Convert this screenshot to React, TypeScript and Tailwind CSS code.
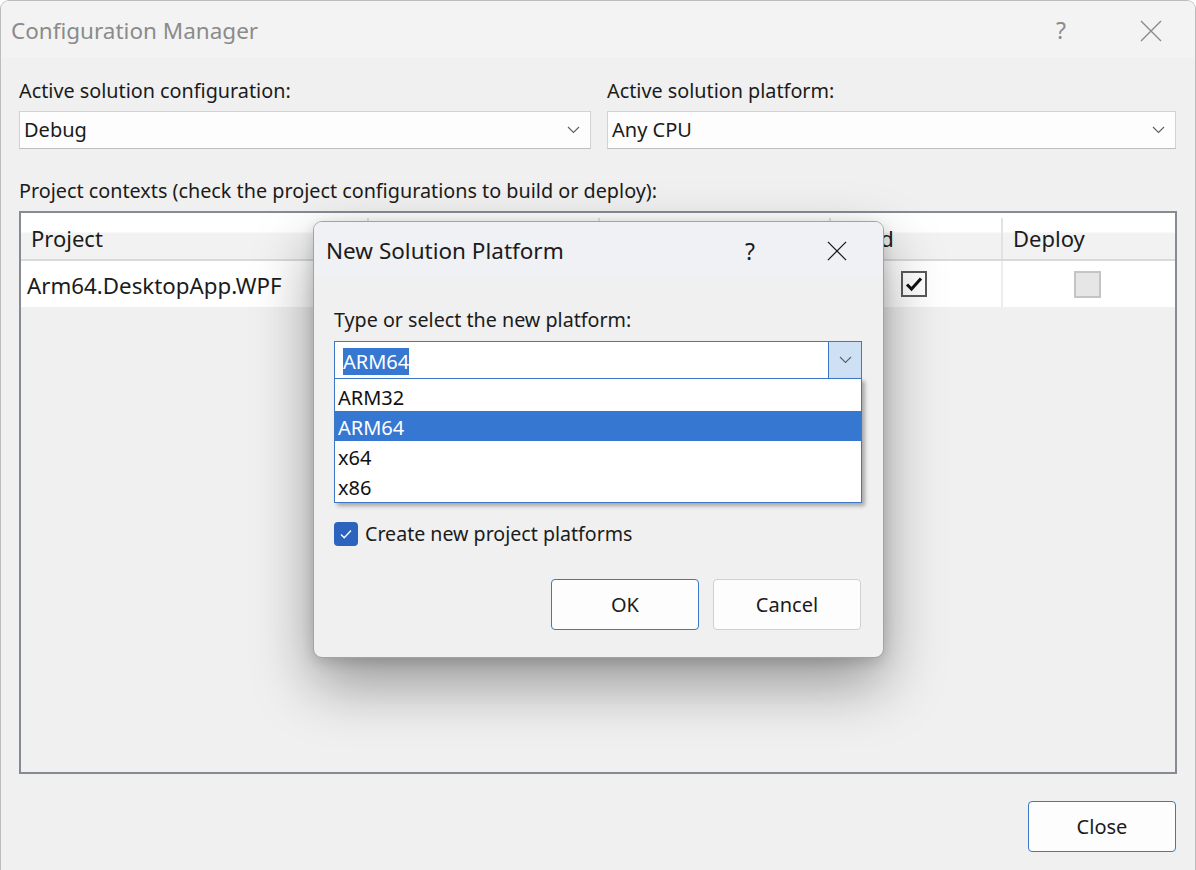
import React from "react";

// Configuration Manager with the "New Solution Platform" dialog on top

const font = { fontFamily: '"Noto Sans", "Open Sans", sans-serif' };

function Chevron({ className = "" }: { className?: string }) {
  return (
    <svg width="13" height="8" viewBox="0 0 13 8" className={className}>
      <path d="M1 1l5.5 5.5L12 1" fill="none" stroke="#5f5f5f" strokeWidth="1.1" />
    </svg>
  );
}

function CloseGlyph({ size = 22, color = "#8a8a8a" }: { size?: number; color?: string }) {
  return (
    <svg width={size} height={size} viewBox="0 0 22 22">
      <path d="M1 1l20 20M21 1L1 21" stroke={color} strokeWidth="1.4" fill="none" />
    </svg>
  );
}

function Combo({ value }: { value: string }) {
  return (
    <div className="flex h-[38px] items-center justify-between border border-[#d2d2d2] border-b-[#bdbdbd] bg-[#fdfdfd] pl-[4px] pr-[10px] text-[20px] text-[#1b1b1b]">
      <span>{value}</span>
      <Chevron />
    </div>
  );
}

function NewPlatformDialog() {
  const items = ["ARM32", "ARM64", "x64", "x86"];
  return (
    <div className="absolute left-[313px] top-[221px] flex h-[437px] w-[571px] flex-col overflow-hidden rounded-[9px] border border-[#a3a3a3] bg-[#f0f0f0] shadow-[0_26px_60px_rgba(0,0,0,0.38),0_4px_14px_rgba(0,0,0,0.14)]">
      <div className="flex h-[55px] items-center bg-[#eff1f5] pl-[12px] pt-[3px]">
        <span className="text-[22.5px] text-[#1b1b1b]">New Solution Platform</span>
        <span className="ml-auto mr-[72px] text-[23px] text-[#1b1b1b]">?</span>
        <span className="mr-[36px]">
          <CloseGlyph size={20} color="#1b1b1b" />
        </span>
      </div>
      <div className="flex flex-1 flex-col px-[20px] pt-[30px]">
        <div className="text-[19.7px] leading-[26px] text-[#1b1b1b]">Type or select the new platform:</div>
        <div className="relative mt-[8px] w-[528px]">
          <div className="flex h-[38px] items-center border border-[#3c78c6] bg-white">
            <div className="flex-1 pl-[8px] pt-[2px]">
              <span className="bg-[#3677d1] text-[20px] leading-[27px] text-white">ARM64</span>
            </div>
            <div className="flex h-full w-[33px] items-center justify-center border-l border-[#3c78c6] bg-[#cde0f4]">
              <Chevron />
            </div>
          </div>
          <div className="absolute left-0 right-0 top-[37px] z-10 border border-[#3c78c6] bg-white pt-[2px] pb-[1px] shadow-[3px_3px_4px_rgba(0,0,0,0.3)]">
            {items.map((it) => (
              <div
                key={it}
                className={
                  it === "ARM64"
                    ? "flex h-[30px] items-center bg-[#3677d1] pl-[3px] pt-[3px] text-[20px] text-white"
                    : "flex h-[30px] items-center pl-[3px] pt-[3px] text-[20px] text-[#111]"
                }
              >
                {it}
              </div>
            ))}
          </div>
        </div>
        <div className="mt-[142px] flex items-center gap-[7px]">
          <div className="flex h-[24px] w-[24px] items-center justify-center rounded-[4px] bg-[#2b63bf]">
            <svg width="14" height="12" viewBox="0 0 14 12">
              <path d="M2 6.5l3.2 3.2L12 2.5" fill="none" stroke="white" strokeWidth="1.3" />
            </svg>
          </div>
          <span className="text-[19.6px] leading-[26px] text-[#1b1b1b]">Create new project platforms</span>
        </div>
        <div className="mt-[32px] flex justify-end gap-[14px] pr-[2px]">
          <button className="h-[51px] w-[148px] rounded-[4px] border border-[#3c78c6] bg-[#fdfdfd] text-[20px] text-[#1b1b1b]">OK</button>
          <button className="h-[51px] w-[148px] rounded-[4px] border border-[#d0d0d0] bg-[#fdfdfd] text-[20px] text-[#1b1b1b]">Cancel</button>
        </div>
      </div>
    </div>
  );
}

export default function App() {
  return (
    <div style={font} className="relative h-[870px] w-[1196px] overflow-hidden bg-white">
      <div className="flex h-[870px] flex-col overflow-hidden rounded-t-[9px] border border-b-0 border-[#bcbcbc] bg-[#f0f0f0]">
        {/* title bar */}
        <div className="flex h-[57px] shrink-0 items-center bg-[#f3f3f3] pl-[10px] pt-[2px]">
          <span className="text-[22.5px] text-[#8b8b8b]">Configuration Manager</span>
          <span className="ml-auto mr-[74px] text-[23px] text-[#8b8b8b]">?</span>
          <span className="mr-[33px]">
            <CloseGlyph />
          </span>
        </div>

        <div className="flex flex-1 flex-col px-[18px] pt-[19px]">
          <div className="grid grid-cols-[572px_569px] gap-x-[16px]">
            <div className="text-[19.8px] leading-[27px] text-[#1b1b1b]">Active solution configuration:</div>
            <div className="text-[19.8px] leading-[27px] text-[#1b1b1b]">Active solution platform:</div>
            <div className="mt-[7px]">
              <Combo value="Debug" />
            </div>
            <div className="mt-[7px]">
              <Combo value="Any CPU" />
            </div>
          </div>

          <div className="mt-[28px] text-[19.8px] leading-[27px] text-[#1b1b1b]">
            Project contexts (check the project configurations to build or deploy):
          </div>

          <div className="mt-[7px] h-[563px] w-[1158px] border-2 border-[#868a94] bg-[#f0f0f0]">
            <div className="flex h-[48px] border-b-2 border-[#d9d9d9] bg-[linear-gradient(#ffffff_0%,#ffffff_40%,#f2f2f2_45%,#f2f2f2_100%)] pt-[5px] text-[22px] text-[#1b1b1b]">
              <div className="flex w-[348px] items-center border-r-2 border-[#e2e2e2] pl-[10px]">Project</div>
              <div className="w-[231px] border-r-2 border-[#e2e2e2]" />
              <div className="w-[231px] border-r-2 border-[#e2e2e2]" />
              <div className="flex w-[172px] items-center border-r-2 border-[#e2e2e2] pl-[10px]">Build</div>
              <div className="flex flex-1 items-center pl-[10px]">Deploy</div>
            </div>
            <div className="flex h-[46px] bg-white text-[22.3px] text-[#1b1b1b]">
              <div className="flex w-[348px] items-center border-r-2 border-[#ececec] pl-[6px] pt-[4px]">Arm64.DesktopApp.WPF</div>
              <div className="w-[231px] border-r-2 border-[#ececec]" />
              <div className="w-[231px] border-r-2 border-[#ececec]" />
              <div className="flex w-[172px] items-center justify-center border-r-2 border-[#ececec] pr-[4px]">
                <div className="flex h-[26px] w-[26px] items-center justify-center border-2 border-[#5a5a5a] bg-white">
                  <svg width="18" height="16" viewBox="0 0 18 16">
                    <path d="M2 8.5l4.5 4.5L16 2.5" fill="none" stroke="#111" strokeWidth="3" />
                  </svg>
                </div>
              </div>
              <div className="flex flex-1 items-center justify-center pr-[4px]">
                <div className="h-[27px] w-[27px] border-2 border-[#c4c4c4] bg-[#e6e6e6]" />
              </div>
            </div>
          </div>

          <div className="mt-[27px] flex justify-end pr-[1px]">
            <button className="h-[51px] w-[148px] rounded-[4px] border border-[#3c78c6] bg-[#fdfdfd] text-[20px] text-[#1b1b1b]">Close</button>
          </div>
        </div>
      </div>

      <NewPlatformDialog />
    </div>
  );
}
